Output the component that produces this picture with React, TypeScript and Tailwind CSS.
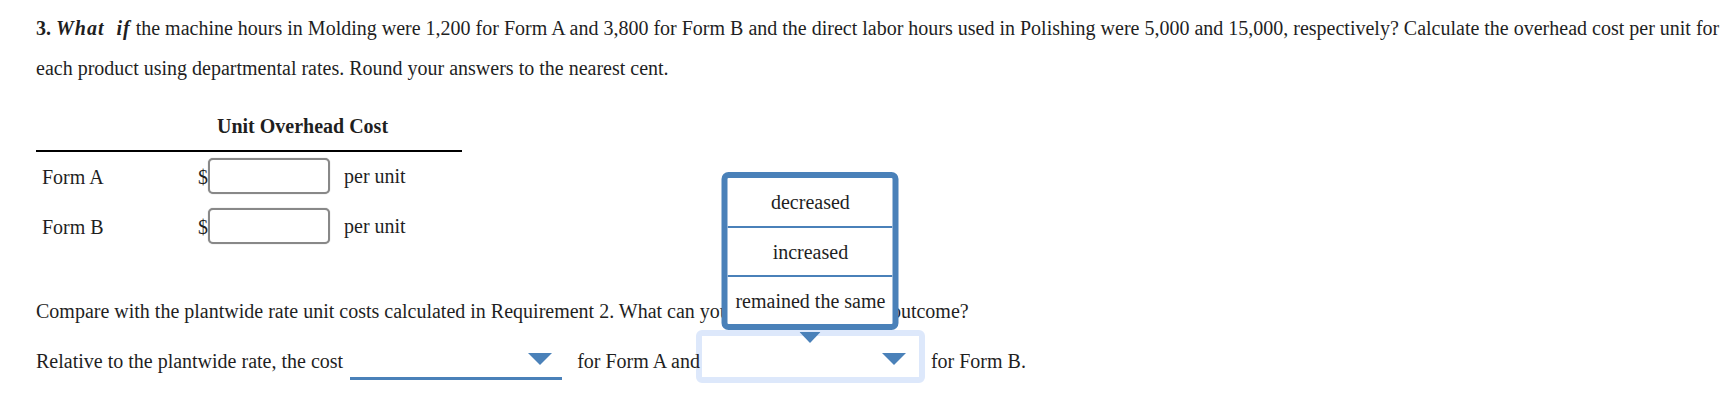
import React from "react";

const Arrow = ({ w = 24, h = 12 }: { w?: number; h?: number }) => (
  <svg width={w} height={h} viewBox={`0 0 ${w} ${h}`}>
    <path d={`M0 0H${w}L${w / 2} ${h}Z`} fill="#4a81b9" />
  </svg>
);

export default function App() {
  return (
    <div className="w-[1732px] h-[410px] bg-white text-[20px] text-[#1f1f1f] font-['Liberation_Serif','Times_New_Roman',serif] pl-[36px] pt-[8px] overflow-hidden">
      <p className="leading-[40px] pr-[4px]">
        <b>3.</b>{" "}
        <b>
          <i className="tracking-[1px]">What&nbsp; if</i>
        </b>{" "}
        the machine hours in Molding were 1,200 for Form A and 3,800 for Form B and the direct labor hours used in Polishing were 5,000 and 15,000, respectively? Calculate the overhead cost per unit for each product using departmental rates. Round your answers to the nearest cent.
      </p>

      <div className="mt-[26px] w-[426px]">
        <div className="flex border-b-2 border-black pb-[12px]">
          <div className="w-[162px]" />
          <div className="w-[209px] text-center font-bold leading-[24px]">Unit Overhead Cost</div>
        </div>
        {["Form A", "Form B"].map((label, i) => (
          <div key={label} className={`flex items-center h-[36px] ${i === 0 ? "mt-[6px]" : "mt-[14px]"}`}>
            <div className="w-[162px] pl-[6px] leading-[24px] pt-[2px]">{label}</div>
            <div className="w-[10px] leading-[24px] pt-[2px]">$</div>
            <div className="w-[122px] h-[36px] border-2 border-[#888888] rounded-[5px] bg-white shadow-[0_0_1px_#999]" />
            <div className="ml-[14px] leading-[24px]">per unit</div>
          </div>
        ))}
      </div>

      <p className="mt-[55px] leading-[24px]">
        Compare with the plantwide rate unit costs calculated in Requirement 2. What can you conclude about the outcome?
      </p>

      <div className="mt-[15px] flex items-center h-[42px]">
        <span className="leading-[24px] pt-[4px]">Relative to the plantwide rate, the cost</span>
        <div className="ml-[7px] w-[212px] h-[42px] border-b-[3px] border-[#4a81b9] flex items-start justify-end pr-[10px] pt-[15px]">
          <Arrow />
        </div>
        <span className="relative z-10 ml-[15px] leading-[24px] pt-[4px]">for Form A and</span>
        <div className="relative ml-[4px] w-[213px] h-[42px] border-b-[3px] border-[#4a81b9] flex items-start justify-end pr-[11px] pt-[15px]">
          <div className="absolute -left-[8px] -right-[8px] -top-[8px] -bottom-[6px] border-[6px] border-[#dde8fb] rounded-[6px] pointer-events-none" />
          <Arrow />
          <div className="absolute -top-[6px] left-1/2 -translate-x-1/2 z-20 flex">
            <Arrow w={21} h={11} />
          </div>
          <div className="absolute bottom-[calc(100%+8px)] left-1/2 -translate-x-1/2 w-[177px] border-[6px] border-[#4a81b9] rounded-[7px] bg-white flex flex-col z-10 overflow-hidden">
            <div className="h-[48px] flex items-center justify-center leading-[24px]">decreased</div>
            <div className="h-[49px] border-t-2 border-[#4a81b9] flex items-center justify-center leading-[24px]">increased</div>
            <div className="h-[49px] border-t-2 border-[#4a81b9] flex items-center justify-center leading-[24px]">remained the same</div>
          </div>
        </div>
        <span className="ml-[14px] leading-[24px] pt-[4px]">for Form B.</span>
      </div>
    </div>
  );
}
